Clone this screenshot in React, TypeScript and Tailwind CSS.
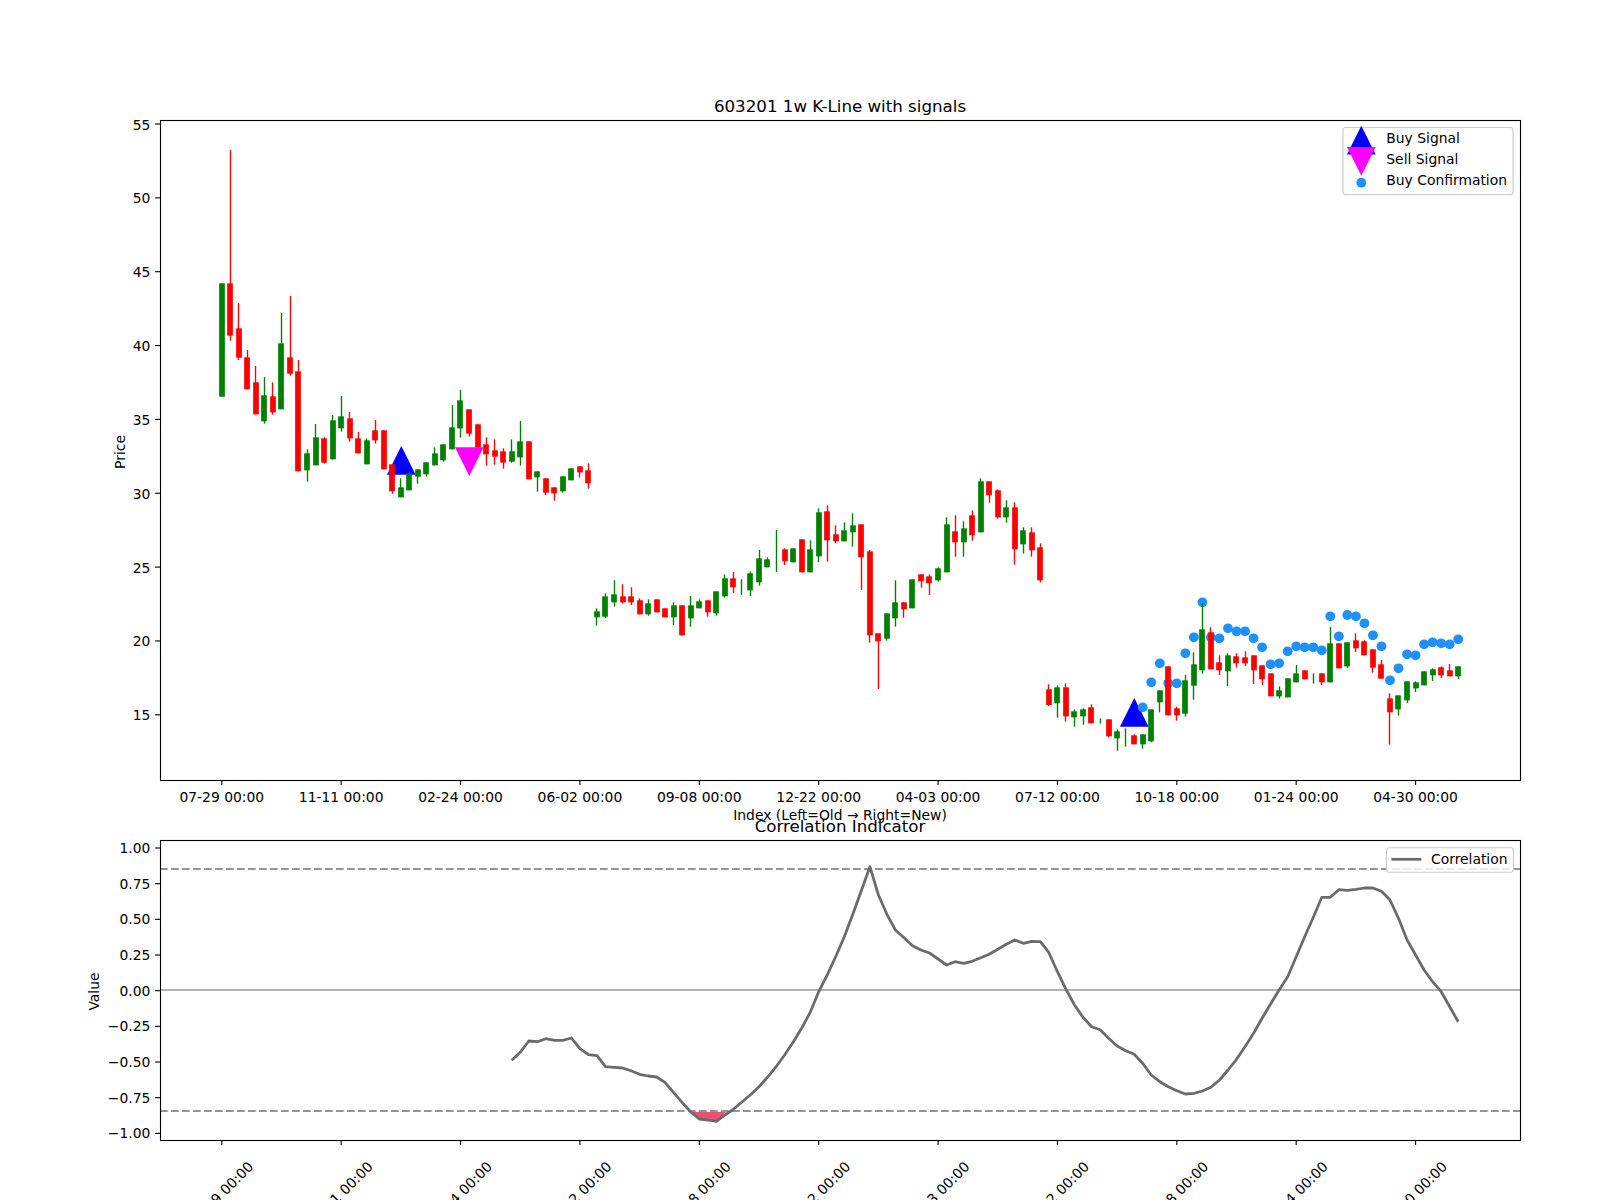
const X0 = 221.8;
const STEP = 8.527;
const x = (i: number) => X0 + STEP * i;

// candle rows: [up, high, bodyTop, bodyBottom, low], read in thirds of a pixel from y0
type Row = [number, number, number, number, number];

const groups: { y0: number; rows: Row[] }[] = [
  {
    y0: 100,
    rows: [
      [1, 550, 550, 890, 890], [0, 150, 550, 707, 722], [0, 609, 685, 773, 780], [0, 750, 772, 868, 868],
      [0, 798, 847, 943, 943], [1, 831, 886, 964, 971], [0, 847, 889, 937, 944], [1, 639, 730, 928, 928],
      [0, 588, 772, 821, 827], [0, 780, 814, 1114, 1114], [1, 1048, 1060, 1111, 1145], [1, 972, 1012, 1096, 1096],
      [0, 1012, 1015, 1088, 1091], [1, 945, 961, 1078, 1078], [1, 888, 949, 985, 995], [0, 936, 955, 1015, 1025],
      [0, 996, 1015, 1060, 1060], [1, 1015, 1021, 1093, 1093], [0, 960, 991, 1021, 1031], [0, 991, 991, 1108, 1108],
      [0, 1093, 1093, 1174, 1181], [1, 1135, 1162, 1192, 1192], [1, 1117, 1120, 1171, 1171], [1, 1108, 1108, 1130, 1151],
      [1, 1087, 1087, 1123, 1130], [1, 1042, 1060, 1096, 1096], [1, 1033, 1033, 1081, 1085], [1, 915, 982, 1048, 1048],
      [1, 870, 901, 985, 1013], [0, 928, 928, 1001, 1010], [0, 973, 973, 1042, 1042], [0, 1012, 1033, 1063, 1097],
      [0, 1018, 1051, 1070, 1094], [0, 1045, 1054, 1088, 1106], [1, 1018, 1054, 1085, 1088], [1, 963, 1024, 1072, 1097],
      [0, 1024, 1024, 1138, 1138], [1, 1114, 1114, 1132, 1175], [0, 1135, 1135, 1178, 1185], [0, 1162, 1162, 1180, 1202],
      [1, 1129, 1129, 1174, 1178], [1, 1105, 1105, 1141, 1141], [0, 1099, 1099, 1117, 1133], [0, 1090, 1111, 1150, 1166],
    ],
  },
  {
    y0: 450,
    rows: [
      [1, 475, 484, 502, 527], [1, 430, 439, 500, 504], [1, 391, 433, 457, 470], [0, 403, 439, 457, 460],
      [0, 412, 439, 457, 465], [0, 445, 451, 493, 493], [1, 448, 460, 493, 497], [0, 448, 448, 487, 487],
      [0, 475, 475, 502, 502], [1, 457, 466, 502, 525], [0, 466, 466, 556, 556], [1, 438, 466, 505, 530],
      [1, 448, 454, 475, 475], [0, 451, 451, 487, 500], [1, 424, 424, 490, 497], [1, 373, 385, 439, 443],
      [0, 366, 385, 412, 429], [1, 388, 400, 400, 435], [1, 364, 370, 421, 438], [1, 300, 325, 397, 407],
      [1, 322, 328, 352, 352], [1, 240, 300, 300, 366], [0, 295, 298, 334, 345], [1, 295, 295, 337, 337],
      [0, 268, 268, 367, 367], [1, 271, 298, 367, 367], [1, 175, 187, 319, 336], [0, 166, 184, 271, 335],
      [0, 226, 253, 274, 280], [1, 217, 241, 274, 274], [1, 190, 226, 247, 290], [0, 223, 223, 322, 420],
      [0, 300, 304, 556, 578], [0, 550, 550, 574, 717], [1, 490, 490, 566, 572], [1, 391, 457, 505, 530],
      [0, 457, 457, 478, 503], [1, 388, 388, 475, 475], [0, 373, 373, 394, 413], [0, 373, 379, 400, 435],
      [1, 352, 355, 391, 395], [1, 202, 223, 367, 367], [0, 196, 244, 277, 320], [1, 214, 235, 277, 320],
      [0, 181, 196, 256, 272], [1, 85, 94, 247, 247], [0, 94, 94, 136, 158], [0, 118, 121, 202, 206],
      [1, 151, 172, 202, 218], [0, 157, 172, 298, 344], [1, 232, 241, 283, 311], [0, 232, 247, 301, 320],
      [0, 280, 292, 391, 397], [0, 703, 718, 765, 768], [1, 706, 712, 760, 803], [0, 700, 712, 799, 815],
    ],
  },
  {
    y0: 580,
    rows: [
      [1, 388, 394, 412, 440], [1, 385, 388, 409, 434], [0, 373, 382, 430, 430], [1, 415, 420, 420, 431],
      [0, 418, 418, 469, 472], [1, 448, 454, 475, 512], [1, 445, 470, 470, 500], [0, 463, 466, 493, 493],
      [1, 463, 463, 493, 506], [1, 388, 388, 484, 487], [1, 331, 331, 367, 397], [0, 259, 259, 406, 406],
      [0, 380, 385, 406, 422], [1, 285, 301, 401, 410], [1, 217, 253, 317, 359], [1, 68, 148, 271, 281],
      [0, 142, 157, 268, 268], [0, 226, 247, 271, 285], [1, 220, 226, 274, 318], [0, 220, 229, 250, 263],
      [0, 214, 232, 250, 258], [0, 226, 226, 271, 312], [0, 256, 256, 298, 315], [0, 280, 280, 349, 349],
      [1, 319, 331, 349, 356], [1, 295, 295, 352, 352], [1, 255, 280, 307, 307], [0, 271, 271, 298, 298],
      [1, 280, 290, 290, 311], [0, 280, 280, 307, 315],
    ],
  },
  {
    y0: 580,
    rows: [
      [1, 141, 190, 307, 307], [0, 190, 190, 265, 265], [1, 187, 187, 259, 264], [0, 160, 181, 205, 216],
      [0, 181, 184, 226, 226], [0, 208, 208, 263, 278], [0, 240, 253, 296, 296], [0, 340, 355, 397, 494],
      [1, 346, 346, 388, 407], [1, 304, 304, 361, 369], [1, 304, 307, 325, 336], [1, 274, 274, 316, 316],
      [1, 265, 268, 286, 303], [0, 259, 262, 286, 294], [0, 252, 271, 289, 289], [1, 259, 259, 289, 297],
    ],
  },
];

const candles = groups.flatMap((g) =>
  g.rows.map(([up, hi, top, bot, lo]) => ({
    up: up === 1,
    hi: g.y0 + hi / 3,
    top: g.y0 + top / 3,
    bot: g.y0 + bot / 3,
    lo: g.y0 + lo / 3,
  })),
);

// buy confirmation dots from index 108, y in thirds of a pixel from 580
const confirm = [
  382, 307, 250, 310, 310, 220, 172, 67, 172, 175, 145, 154, 154, 175, 202, 253, 250, 214, 199, 202, 202, 211,
  109, 169, 105, 109, 130, 166, 199, 301, 265, 223, 226, 193, 187, 190, 193, 178,
];

// correlation line from index 34, y in thirds of a pixel from 780
const corr = [
  841, 817, 783, 785, 776, 781, 781, 774, 806, 824, 827, 860, 862, 864, 872, 883, 888, 891, 908, 938, 968, 996,
  1017, 1020, 1024, 1005, 988, 966, 944, 920, 892, 860, 825, 787, 745, 697, 635, 585, 530, 470, 403, 332, 260,
  345, 403, 450, 473, 497, 510, 519, 537, 555, 545, 550, 544, 533, 523, 508, 493, 480, 490, 484, 485, 518, 575,
  628, 675, 712, 740, 749, 775, 798, 812, 823, 850, 885, 905, 920, 932, 942, 940, 933, 922, 900, 870, 838, 800,
  760, 715, 672, 630, 590, 530, 470, 412, 352, 352, 329, 331, 328, 324, 324, 334, 360, 415, 480, 525, 570, 605,
  635, 680, 725,
];
const corrPoints = corr.map((v, k) => `${x(k + 34).toFixed(1)},${(780 + v / 3).toFixed(1)}`).join(' ');

const tickLabels = [
  '07-29 00:00', '11-11 00:00', '02-24 00:00', '06-02 00:00', '09-08 00:00', '12-22 00:00',
  '04-03 00:00', '07-12 00:00', '10-18 00:00', '01-24 00:00', '04-30 00:00',
];
const priceTicks = [55, 50, 45, 40, 35, 30, 25, 20, 15];
const priceY = (p: number) => 124 + (55 - p) * 14.77;
const corrTicks = ['1.00', '0.75', '0.50', '0.25', '0.00', '−0.25', '−0.50', '−0.75', '−1.00'];
const corrY = (k: number) => 848 + k * 35.67;

function Tri({ cx, y, down, className }: { cx: number; y: number; down?: boolean; className: string }) {
  // y is the top edge of a 28.7px marker
  const pts = down
    ? `${cx - 14.35},${y} ${cx + 14.35},${y} ${cx},${y + 28.7}`
    : `${cx},${y} ${cx - 14.35},${y + 28.7} ${cx + 14.35},${y + 28.7}`;
  return <polygon points={pts} className={className} />;
}

function PricePanel() {
  return (
    <svg
      viewBox="160 120 1360 660"
      className="w-[1360px] h-[660px] overflow-visible shrink-0 text-[13.89px] fill-black"
    >
      <text x={840} y={106} textAnchor="middle" dominantBaseline="central" className="text-[16.67px]">
        603201 1w K-Line with signals
      </text>

      <Tri cx={401.3} y={446} className="fill-[#0000ff]" />
      <Tri cx={469.3} y={447.3} down className="fill-[#ff00ff]" />
      <Tri cx={1134.3} y={698} className="fill-[#0000ff]" />
      {confirm.map((v, k) => (
        <circle key={k} cx={x(k + 108)} cy={580 + v / 3} r={4.9} className="fill-[#1e90ff]" />
      ))}

      {candles.map((c, i) => {
        const cx = Math.floor(x(i)) + 0.5;
        const left = Math.floor(x(i) - 2.56) + 0.15;
        return (
          <g key={i} className={c.up ? 'fill-[#008000] stroke-[#008000]' : 'fill-[#ff0000] stroke-[#ff0000]'}>
            <line x1={cx} x2={cx} y1={c.hi} y2={c.lo} strokeWidth={1.39} />
            {c.bot > c.top && <rect x={left} y={c.top} width={5.7} height={c.bot - c.top} strokeWidth={0} />}
          </g>
        );
      })}

      <rect x={160.5} y={120.5} width={1360} height={660} strokeWidth={1.11} className="fill-none stroke-black" />

      {priceTicks.map((p) => (
        <g key={p}>
          <line x1={155.1} x2={160} y1={priceY(p)} y2={priceY(p)} strokeWidth={1.11} className="stroke-black" />
          <text x={150.3} y={priceY(p) + 0.5} textAnchor="end" dominantBaseline="central">{p}</text>
        </g>
      ))}
      {tickLabels.map((t, k) => (
        <g key={t}>
          <line x1={x(k * 14)} x2={x(k * 14)} y1={780} y2={784.9} strokeWidth={1.11} className="stroke-black" />
          <text x={x(k * 14)} y={796.5} textAnchor="middle" dominantBaseline="central">{t}</text>
        </g>
      ))}
      <text x={840} y={815} textAnchor="middle" dominantBaseline="central">Index (Left=Old → Right=New)</text>
      <text transform="translate(119.5 452) rotate(-90)" textAnchor="middle" dominantBaseline="central">Price</text>

      {/* legend */}
      <rect x={1343} y={127.5} width={170} height={67} rx={2.78} strokeWidth={1.11} className="fill-white/80 stroke-[#cccccc]" />
      <Tri cx={1361.3} y={125.7} className="fill-[#0000ff]" />
      <Tri cx={1361.3} y={147} down className="fill-[#ff00ff]" />
      <circle cx={1361.3} cy={182.7} r={4.9} className="fill-[#1e90ff]" />
      <text x={1386.3} y={138.3} dominantBaseline="central">Buy Signal</text>
      <text x={1386.3} y={159.3} dominantBaseline="central">Sell Signal</text>
      <text x={1386.3} y={180.3} dominantBaseline="central">Buy Confirmation</text>
    </svg>
  );
}

function CorrelationPanel() {
  return (
    <svg
      viewBox="160 840 1360 300"
      className="w-[1360px] h-[300px] overflow-visible shrink-0 text-[13.89px] fill-black"
    >
      <text x={840} y={826} textAnchor="middle" dominantBaseline="central" className="text-[16.67px]">
        Correlation Indicator
      </text>

      <line x1={160} x2={1520} y1={990} y2={990} strokeWidth={2} className="stroke-[#b2b2b2]" />
      <line x1={160} x2={1520} y1={869} y2={869} strokeWidth={2.08} strokeDasharray="7.7 3.3" className="stroke-[#949494]" />
      <line x1={160} x2={1520} y1={1111} y2={1111} strokeWidth={2.08} strokeDasharray="7.7 3.3" className="stroke-[#949494]" />
      <polygon points="690.7,1112 726,1112 716.4,1121.3 707.8,1120 699.3,1119 696,1117.3" className="fill-[#ea5275]" />
      <polyline points={corrPoints} strokeWidth={2.78} strokeLinejoin="round" className="fill-none stroke-[#6b6b6b]" />

      <rect x={160.5} y={840.5} width={1360} height={300} strokeWidth={1.11} className="fill-none stroke-black" />

      {corrTicks.map((t, k) => (
        <g key={t}>
          <line x1={155.1} x2={160} y1={corrY(k)} y2={corrY(k)} strokeWidth={1.11} className="stroke-black" />
          <text x={150.3} y={corrY(k)} textAnchor="end" dominantBaseline="central">{t}</text>
        </g>
      ))}
      {tickLabels.map((t, k) => (
        <g key={t}>
          <line x1={x(k * 14)} x2={x(k * 14)} y1={1140} y2={1144.9} strokeWidth={1.11} className="stroke-black" />
          <text
            transform={`translate(${x(k * 14) - 1} 1194) rotate(-45)`}
            textAnchor="middle"
            dominantBaseline="central"
          >
            {t}
          </text>
        </g>
      ))}
      <text transform="translate(93.5 991.5) rotate(-90)" textAnchor="middle" dominantBaseline="central">Value</text>

      {/* legend */}
      <rect x={1386.5} y={847.7} width={127} height={24.6} rx={2.78} strokeWidth={1.11} className="fill-white/80 stroke-[#cccccc]" />
      <line x1={1391.4} x2={1421.4} y1={859.3} y2={859.3} strokeWidth={2.78} className="stroke-[#6b6b6b]" />
      <text x={1431} y={859.3} dominantBaseline="central">Correlation</text>
    </svg>
  );
}

export default function App() {
  return (
    <div className="w-[1600px] h-[1200px] overflow-hidden bg-white pt-[120px] pl-[160px] flex flex-col gap-[60px] font-['DejaVu_Sans',sans-serif]">
      <PricePanel />
      <CorrelationPanel />
    </div>
  );
}
